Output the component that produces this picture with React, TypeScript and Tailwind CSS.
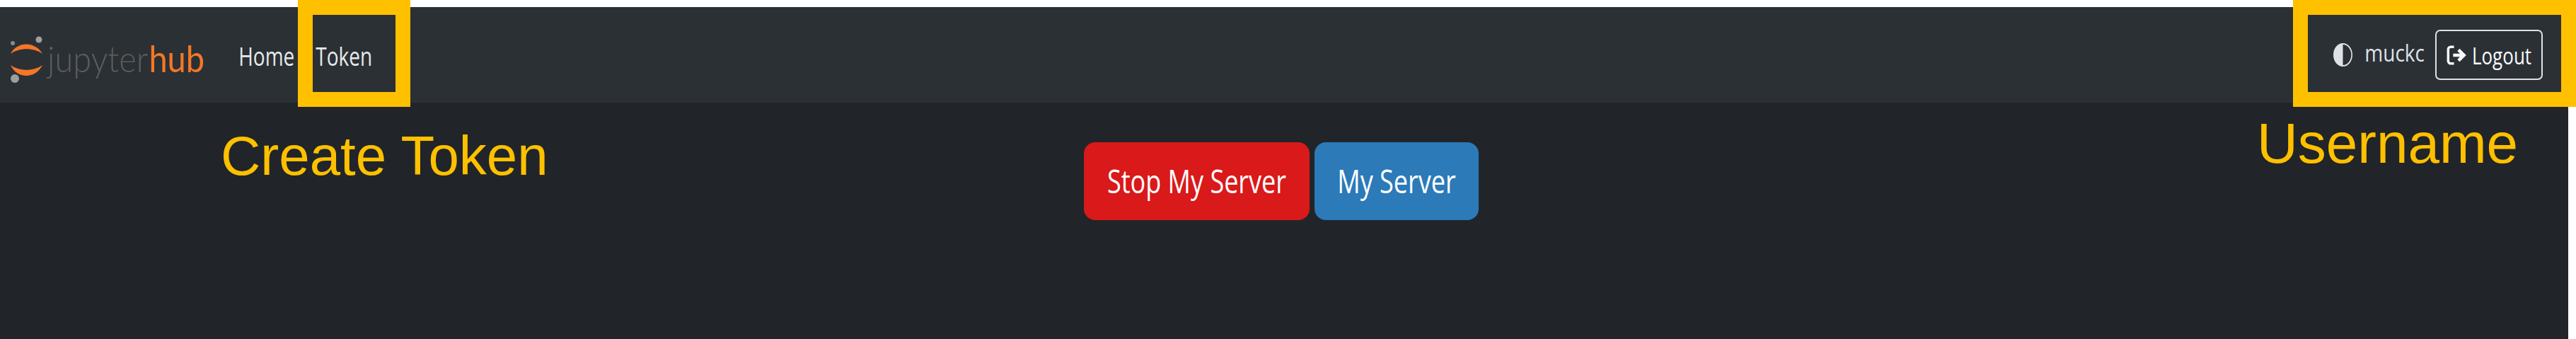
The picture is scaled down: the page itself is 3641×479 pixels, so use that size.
function HubMark() {
  return (
    <svg width="52" height="72" viewBox="0 0 52 72" className="shrink-0" aria-hidden>
      <path d="M3 29 C12 11 38 11 48 29 C36 20 15 20 3 29 Z" fill="#f37726" />
      <path d="M3 45 C15 54 36 54 48 45 C38 65 12 65 3 45 Z" fill="#f37726" />
      <circle cx="43" cy="9" r="4.5" fill="#9e9e9e" />
      <circle cx="6" cy="14" r="3" fill="#8a8a8a" />
      <circle cx="9" cy="64" r="6" fill="#9e9e9e" />
    </svg>
  );
}

function ThemeIcon() {
  return (
    <svg width="27" height="33" viewBox="0 0 16 16" preserveAspectRatio="none" fill="#dee2e6" aria-hidden>
      <path d="M8 15A7 7 0 1 0 8 1zm0 1A8 8 0 1 1 8 0a8 8 0 0 1 0 16" />
    </svg>
  );
}

function LogoutIcon() {
  return (
    <svg width="28" height="28" viewBox="0 0 24 24" fill="none" stroke="#f8f9fa" aria-hidden>
      <path d="M9 2H5a3 3 0 0 0-3 3v14a3 3 0 0 0 3 3h4" strokeWidth="3" />
      <path d="M8 12h13M14.5 5.5l6.5 6.5-6.5 6.5" strokeWidth="4" />
    </svg>
  );
}

export default function App() {
  return (
    <div className="relative flex h-[479px] w-[3641px] flex-col overflow-hidden bg-white pt-[10px] pr-[11px] font-['Open_Sans','Noto_Sans',sans-serif]">
      <nav className="flex h-[135px] shrink-0 items-center justify-between bg-[#2b3035] pr-[36px] pl-[12px]">
        <div className="flex items-center">
          <a className="flex items-center gap-[3px] pt-[10px]">
            <HubMark />
            <span className="flex scale-y-[1.1] items-baseline font-['Lato',sans-serif] text-[47px] leading-none">
              <span className="font-light text-[#5c5c5c]">jupyter</span>
              <span className="ml-[1px] text-[#f37726]">hub</span>
            </span>
          </a>
          <ul className="ml-[48px] flex gap-[30px] pt-[2px] text-[28px] text-[#e6e8ea]">
            <li className="scale-y-[1.28]">Home</li>
            <li className="scale-y-[1.28]">Token</li>
          </ul>
        </div>
        <div className="flex items-center">
          <ThemeIcon />
          <span className="ml-[17px] -translate-y-[4px] scale-y-[1.2] text-[28px] leading-none text-[#dee2e6]">muckc</span>
          <button className="ml-[15px] flex h-[71px] w-[152px] items-center justify-center gap-[8px] rounded-[7px] border-2 border-[#dee2e6] text-[26px] text-[#f8f9fa]">
            <LogoutIcon />
            <span className="translate-y-[2px] scale-y-[1.25]">Logout</span>
          </button>
        </div>
      </nav>
      <main className="flex flex-1 justify-center gap-[7px] bg-[#212529] pt-[56px] pr-[8px]">
        <button className="h-[110px] w-[319px] rounded-[16px] bg-[#d9191a] text-[36px] text-white">
          <span className="inline-block scale-y-[1.28]">Stop My Server</span>
        </button>
        <button className="h-[110px] w-[232px] rounded-[16px] bg-[#2c7ab8] text-[36px] text-white">
          <span className="inline-block scale-y-[1.28]">My Server</span>
        </button>
      </main>

      {/* annotations drawn over the screenshot */}
      <div className="absolute top-0 left-[421px] h-[151px] w-[159px] border-[21px] border-[#ffc000]" />
      <div className="absolute top-0 left-[3241px] h-[151px] w-[400px] border-[21px] border-[#ffc000]" />
      <span className="absolute top-[170px] left-[312px] font-['Liberation_Sans',sans-serif] text-[78px] leading-[100px] text-[#ffc000]">
        Create Token
      </span>
      <span className="absolute top-[153px] left-[3190px] font-['Liberation_Sans',sans-serif] text-[80px] leading-[100px] text-[#ffc000]">
        Username
      </span>
    </div>
  );
}
